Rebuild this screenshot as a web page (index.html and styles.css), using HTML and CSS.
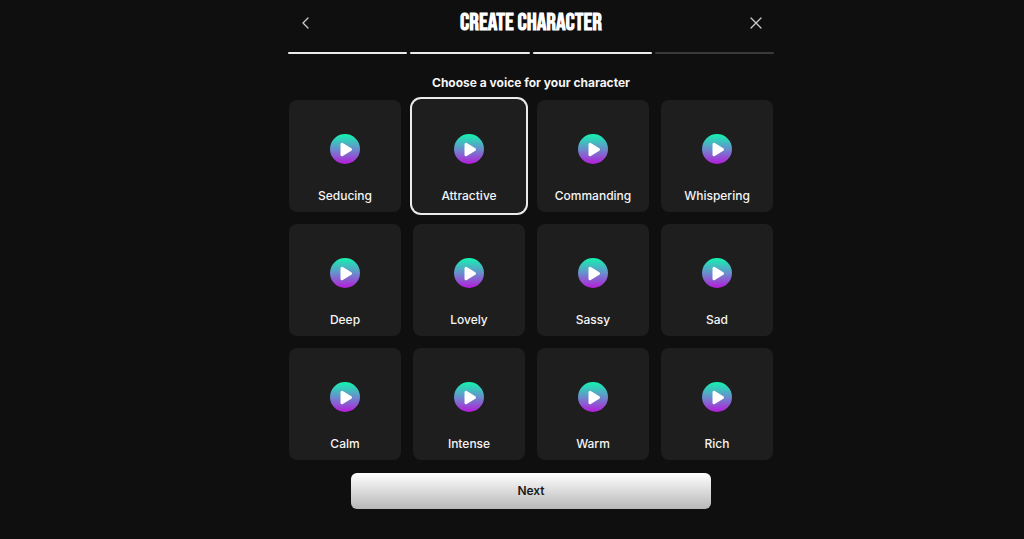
FILE: index.html
```html
<!DOCTYPE html>
<html lang="en">
<head>
    <meta charset="UTF-8">
    <meta name="viewport" content="width=device-width, initial-scale=1.0">
    <title>Create Character</title>
    <link rel="stylesheet" href="styles.css">
</head>
<body>
    <svg class="sprite" aria-hidden="true">
        <defs>
            <linearGradient id="play-gradient" x1="0" y1="0" x2="0" y2="1">
                <stop offset="0" stop-color="#12f5b0"/>
                <stop offset="0.5" stop-color="#688fcb"/>
                <stop offset="1" stop-color="#b71bdb"/>
            </linearGradient>
            <symbol id="play" viewBox="0 0 30 30">
                <circle cx="15" cy="15" r="15" fill="url(#play-gradient)"/>
                <path d="M12 10.300v10.400l8.500-5.200z" fill="#fff" stroke="#fff" stroke-width="3" stroke-linejoin="round"/>
            </symbol>
        </defs>
    </svg>

    <main class="container">
        <header class="header">
            <button type="button" class="icon-btn" aria-label="Back">
                <svg width="12" height="12" viewBox="0 0 12 12"><path d="M8 1L3 6l5 5"/></svg>
            </button>
            <h1>CREATE CHARACTER</h1>
            <button type="button" class="icon-btn" aria-label="Close">
                <svg width="12" height="12" viewBox="0 0 12 12"><path d="M1 1l10 10M11 1L1 11"/></svg>
            </button>
        </header>

        <div class="steps">
            <span class="step done"></span>
            <span class="step done"></span>
            <span class="step done"></span>
            <span class="step"></span>
        </div>

        <form>
            <h2 id="voice-title">Choose a voice for your character</h2>

            <div class="voices" role="radiogroup" aria-labelledby="voice-title">
                <div class="voice">
                    <input type="radio" name="voice" id="seducing">
                    <button type="button" class="play-btn" aria-label="Play"><svg><use href="#play"/></svg></button>
                    <label for="seducing">Seducing</label>
                </div>
                <div class="voice">
                    <input type="radio" name="voice" id="attractive" checked>
                    <button type="button" class="play-btn" aria-label="Play"><svg><use href="#play"/></svg></button>
                    <label for="attractive">Attractive</label>
                </div>
                <div class="voice">
                    <input type="radio" name="voice" id="commanding">
                    <button type="button" class="play-btn" aria-label="Play"><svg><use href="#play"/></svg></button>
                    <label for="commanding">Commanding</label>
                </div>
                <div class="voice">
                    <input type="radio" name="voice" id="whispering">
                    <button type="button" class="play-btn" aria-label="Play"><svg><use href="#play"/></svg></button>
                    <label for="whispering">Whispering</label>
                </div>
                <div class="voice">
                    <input type="radio" name="voice" id="deep">
                    <button type="button" class="play-btn" aria-label="Play"><svg><use href="#play"/></svg></button>
                    <label for="deep">Deep</label>
                </div>
                <div class="voice">
                    <input type="radio" name="voice" id="lovely">
                    <button type="button" class="play-btn" aria-label="Play"><svg><use href="#play"/></svg></button>
                    <label for="lovely">Lovely</label>
                </div>
                <div class="voice">
                    <input type="radio" name="voice" id="sassy">
                    <button type="button" class="play-btn" aria-label="Play"><svg><use href="#play"/></svg></button>
                    <label for="sassy">Sassy</label>
                </div>
                <div class="voice">
                    <input type="radio" name="voice" id="sad">
                    <button type="button" class="play-btn" aria-label="Play"><svg><use href="#play"/></svg></button>
                    <label for="sad">Sad</label>
                </div>
                <div class="voice">
                    <input type="radio" name="voice" id="calm">
                    <button type="button" class="play-btn" aria-label="Play"><svg><use href="#play"/></svg></button>
                    <label for="calm">Calm</label>
                </div>
                <div class="voice">
                    <input type="radio" name="voice" id="intense">
                    <button type="button" class="play-btn" aria-label="Play"><svg><use href="#play"/></svg></button>
                    <label for="intense">Intense</label>
                </div>
                <div class="voice">
                    <input type="radio" name="voice" id="warm">
                    <button type="button" class="play-btn" aria-label="Play"><svg><use href="#play"/></svg></button>
                    <label for="warm">Warm</label>
                </div>
                <div class="voice">
                    <input type="radio" name="voice" id="rich">
                    <button type="button" class="play-btn" aria-label="Play"><svg><use href="#play"/></svg></button>
                    <label for="rich">Rich</label>
                </div>
            </div>

            <button type="submit" class="next-btn">Next</button>
        </form>
    </main>
</body>
</html>
```

FILE: styles.css
```css
* {
    box-sizing: border-box;
}
body {
    margin: 0;
    padding-left: 38px;
    background-color: #0f0f0f;
    color: #f5f5f5;
    font-family: Inter, "Liberation Sans", sans-serif;
    font-size: 12px;
    line-height: 16px;
}
.sprite {
    position: absolute;
    width: 0;
    height: 0;
}
.container {
    max-width: 486px;
    margin: 0 auto;
}
.header {
    display: flex;
    align-items: center;
    justify-content: space-between;
    height: 46px;
    padding: 0 6px;
}
h1 {
    margin: 0;
    color: #fff;
    font-family: "Bebas Neue", "Liberation Sans Narrow", "Liberation Sans", sans-serif;
    font-size: 24px;
    font-weight: bold;
    line-height: 24px;
}
.icon-btn {
    display: flex;
    align-items: center;
    justify-content: center;
    width: 24px;
    height: 24px;
    padding: 0;
    border: none;
    background: none;
    cursor: pointer;
}
.icon-btn path {
    fill: none;
    stroke: #ccc;
    stroke-width: 1.3;
    stroke-linecap: round;
    stroke-linejoin: round;
}
.steps {
    display: flex;
    gap: 3px;
    margin-top: 6px;
}
.step {
    flex: 1;
    height: 2px;
    border-radius: 1px;
    background-color: #3a3a3a;
}
.step.done {
    background-color: #ebebeb;
}
h2 {
    margin: 21px 0 9px;
    font-size: 12px;
    font-weight: 700;
    line-height: 16px;
    text-align: center;
}
.voices {
    display: grid;
    grid-template-columns: repeat(4, 1fr);
    gap: 12px;
    padding: 0 1px;
}
.voice {
    position: relative;
    display: flex;
    flex-direction: column;
    align-items: center;
    justify-content: flex-end;
    gap: 24px;
    aspect-ratio: 1;
    padding-bottom: 8px;
    border-radius: 8px;
    background-color: #1e1e1e;
    font-weight: 500;
}
.voice:has(input:checked) {
    box-shadow: 0 0 0 1px #1e1e1e, 0 0 0 3px #ebebeb;
}
/* the radio covers the whole card so it can be clicked anywhere */
.voice input {
    position: absolute;
    inset: 0;
    margin: 0;
    appearance: none;
    cursor: pointer;
}
.play-btn {
    position: relative;
    width: 30px;
    height: 30px;
    padding: 0;
    border: none;
    border-radius: 50%;
    background: none;
    cursor: pointer;
}
.play-btn svg {
    display: block;
    width: 30px;
    height: 30px;
}
.next-btn {
    display: block;
    width: 75%;
    max-width: 360px;
    height: 36px;
    margin: 13px auto 0;
    border: none;
    border-radius: 6px;
    background: linear-gradient(#fff, #b8b8b8);
    color: #1a1a1a;
    font: 600 12px/16px Inter, "Liberation Sans", sans-serif;
    cursor: pointer;
}
```
